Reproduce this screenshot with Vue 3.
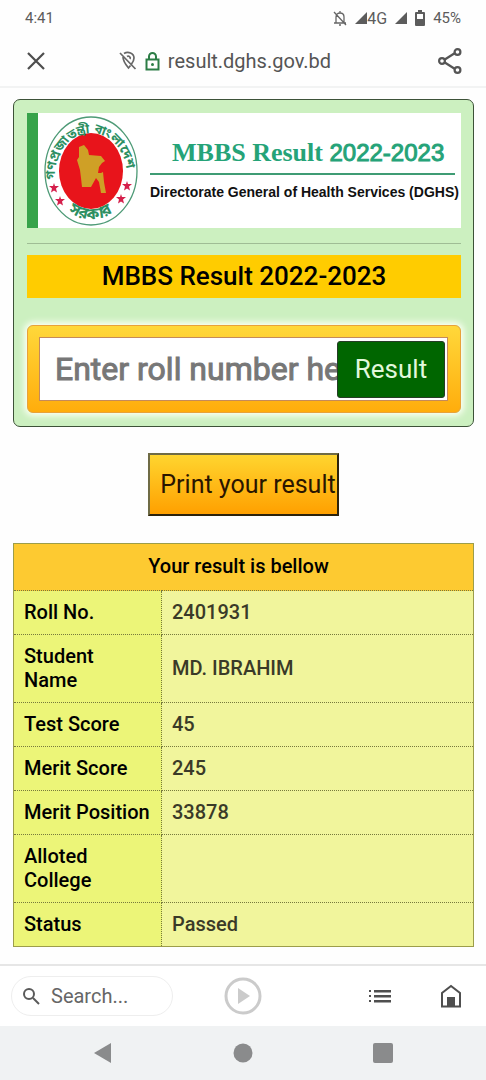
<script setup>
import { ref } from 'vue'

const roll = ref('')
const search = ref('')
const rows = [
  { label: 'Roll No.', value: '2401931' },
  { label: 'Student Name', value: 'MD. IBRAHIM' },
  { label: 'Test Score', value: '45' },
  { label: 'Merit Score', value: '245' },
  { label: 'Merit Position', value: '33878' },
  { label: 'Alloted College', value: '' },
  { label: 'Status', value: 'Passed' }
]
</script>

<template>
  <div class="screen">
    <header>
      <div class="status">
        <span>4:41</span>
        <div class="signals">
          <svg width="14" height="16" viewBox="0 0 14 16" fill="none" stroke="#666" stroke-width="1.3">
            <path d="M1 13h12M3 13V7c0-3 2-4 4-4s4 1 4 4v6M7 3V1M6 15h2M1 2l12 13" />
          </svg>
          <div class="network">
            <svg width="12" height="12" viewBox="0 0 12 12"><path d="M0 12L12 0v12z" fill="#5c5c5c" /></svg>
            <span class="fourg">4G</span>
          </div>
          <svg width="12" height="12" viewBox="0 0 12 12"><path d="M0 12L12 0v12z" fill="#5c5c5c" /></svg>
          <svg width="10" height="16" viewBox="0 0 10 16">
            <path d="M3 0h4v2h2q1 0 1 1v12q0 1-1 1H1q-1 0-1-1V3q0-1 1-1h2z" fill="#5c5c5c" />
            <path d="M2 4h6v5H2z" fill="#fff" />
          </svg>
          <span>45%</span>
        </div>
      </div>
      <div class="address">
        <button class="icon" aria-label="Close">
          <svg width="20" height="20" viewBox="0 0 20 20" fill="none" stroke="#4d4d4d" stroke-width="2.2"><path d="M2 2l16 16M18 2L2 18" /></svg>
        </button>
        <div class="site">
          <svg width="18" height="20" viewBox="0 0 18 20" fill="none" stroke="#666" stroke-width="1.7">
            <path d="M5 2.500C9 0 15 2 15 7c0 2-1 4-2.500 6M4 6c0 4 3 8 5.500 11l2-2.500M1 2l15.500 16" />
            <path d="M8 5.500a2 2 0 0 1 3 2.500" />
          </svg>
          <svg width="15" height="19" viewBox="0 0 15 19" fill="none" stroke="#2c7d46" stroke-width="2">
            <path d="M1.500 7.500h12v10h-12zM4 7V4.500a3.500 3.500 0 0 1 7 0V7" />
            <circle cx="7.500" cy="12.500" r="1.500" fill="#2c7d46" stroke="none" />
          </svg>
          <span>result.dghs.gov.bd</span>
        </div>
        <button class="icon" aria-label="Share">
          <svg width="24" height="26" viewBox="0 0 24 26" fill="none" stroke="#555" stroke-width="2.2">
            <path d="M6 12L17 5M6 14l11 7" />
            <circle cx="4" cy="13" r="2.900" /><circle cx="19.500" cy="4" r="2.900" /><circle cx="19.500" cy="22" r="2.900" />
          </svg>
        </button>
      </div>
    </header>

    <main>
      <section class="card">
        <div class="banner">
          <svg class="emblem" width="94" height="110" viewBox="0 0 94 110" role="img" aria-label="Government emblem">
            <defs>
              <path id="arc-top" d="M15.500 81A36 43 0 1 1 81 74" />
              <path id="arc-bottom" d="M19 91A43 50 0 0 0 77 89" />
            </defs>
            <ellipse cx="47" cy="55" rx="46" ry="54" fill="#fff" stroke="#4d9a76" stroke-width="1.300" />
            <ellipse cx="47" cy="55" rx="32" ry="38" fill="#e8141b" />
            <path d="M35 31l5-2 4 5 1 5 12 1 4 5-3 2-3 4-1 6 3 0 2-1 1 10 2 11-5 0-2-11-3-4-5 9-9 0-1-9-1-8-3-10 2-3z" fill="#cfa026" />
            <g fill="#d51f4b">
              <path id="star" d="M10 67l1 3 4 0-3 2.500 1 4-3-2-3 2 1-4-3-2.500 4 0z" />
              <use href="#star" x="6" y="13" /><use href="#star" x="73" y="-2" /><use href="#star" x="67" y="11" />
            </g>
            <g class="ring">
              <text><textPath href="#arc-top" startOffset="18">গণপ্রজাতন্ত্রী বাংলাদেশ</textPath></text>
              <text class="ring-bottom"><textPath href="#arc-bottom" startOffset="7">সরকার</textPath></text>
            </g>
          </svg>
          <div class="heading">
            <div class="heading-title">MBBS Result <span>2022-2023</span></div>
            <div class="heading-sub">Directorate General of Health Services (DGHS)</div>
          </div>
        </div>
        <hr />
        <h1>MBBS Result 2022-2023</h1>
        <form class="lookup" @submit.prevent>
          <input v-model="roll" type="text" aria-label="Roll number" placeholder="Enter roll number here" />
          <button type="submit">Result</button>
        </form>
      </section>

      <button class="print">Print your result</button>

      <table>
        <thead>
          <tr><th colspan="2">Your result is bellow</th></tr>
        </thead>
        <tbody>
          <tr v-for="row in rows" :key="row.label">
            <th scope="row">{{ row.label }}</th>
            <td>{{ row.value }}</td>
          </tr>
        </tbody>
      </table>
    </main>

    <footer>
      <div class="toolbar">
        <label class="search">
          <svg width="18" height="18" viewBox="0 0 18 18" fill="none" stroke="#5a5a5a" stroke-width="2"><circle cx="7" cy="7" r="5" /><path d="M11 11l6 6" /></svg>
          <input v-model="search" type="text" aria-label="Search" placeholder="Search..." />
        </label>
        <button class="icon" aria-label="Play">
          <svg width="38" height="38" viewBox="0 0 38 38"><circle cx="19" cy="19" r="17" fill="none" stroke="#cbcbcb" stroke-width="3" /><path d="M14 11l12 8-12 8z" fill="#cbcbcb" /></svg>
        </button>
        <div class="tools">
          <button class="icon" aria-label="List">
            <svg width="24" height="14" viewBox="0 0 24 14" fill="#4f4f4f"><path d="M1 1h2v2H1zM1 6h2v2H1zM1 11h2v2H1zM6 1h17v2.500H6zM6 6h17v2.500H6zM6 11h17v2.500H6z" /></svg>
          </button>
          <button class="icon" aria-label="Home">
            <svg width="22" height="24" viewBox="0 0 22 24"><path d="M2 22.500V9l9-7 9 7v13.500z" fill="none" stroke="#4f4f4f" stroke-width="2" /><path d="M7 13h8v10H7z" fill="#4f4f4f" /></svg>
          </button>
        </div>
      </div>
      <nav>
        <button class="icon" aria-label="Back"><svg width="20" height="20" viewBox="0 0 20 20"><path d="M1 10L18 0v20z" fill="#8a8b8c" /></svg></button>
        <button class="icon" aria-label="Home screen"><svg width="20" height="20" viewBox="0 0 20 20"><circle cx="10" cy="10" r="9.500" fill="#8a8b8c" /></svg></button>
        <button class="icon" aria-label="Recent apps"><svg width="20" height="20" viewBox="0 0 20 20"><rect width="20" height="20" rx="2" fill="#8a8b8c" /></svg></button>
      </nav>
    </footer>
  </div>
</template>

<style>
body {
  background: #fefefe;
}
</style>

<style scoped>
.screen {
  display: flex;
  flex-direction: column;
  min-height: 100vh;
  font-family: Roboto, "Liberation Sans", sans-serif;
  color: #000;
}
* {
  box-sizing: border-box;
}
svg {
  display: block;
  flex: none;
}
button,
input {
  font-family: inherit;
}
.icon {
  border: 0;
  padding: 0;
  background: none;
}
header {
  border-bottom: 2px solid #f2f3f3;
}
.status {
  display: flex;
  justify-content: space-between;
  align-items: center;
  height: 36px;
  padding: 0 25px;
  font-size: 15px;
  color: #5c5c5c;
}
.signals,
.network {
  display: flex;
  align-items: center;
}
.signals {
  gap: 8px;
}
.fourg {
  font-size: 16px;
}
.address {
  display: flex;
  align-items: center;
  height: 50px;
  padding: 0 24px 0 26px;
}
.site {
  flex: 1;
  display: flex;
  justify-content: center;
  align-items: center;
  gap: 8px;
  padding-right: 34px;
  font-size: 20px;
  color: #555;
}
main {
  flex: 1;
  display: flex;
  flex-direction: column;
  align-items: center;
  padding: 11px 12px 17px 13px;
}
.card {
  width: 100%;
  padding: 13px 12px 13px 13px;
  border: 1px solid #3d5238;
  border-radius: 7px;
  background: #ccf0c0;
}
.banner {
  display: flex;
  align-items: center;
  height: 115px;
  padding: 0 6px;
  border-left: 11px solid #37a34a;
  background: #fff;
}
.ring {
  font-family: "Noto Sans Bengali", "Noto Sans", sans-serif;
  font-size: 13px;
  font-weight: 700;
  fill: #2d8f62;
}
.ring-bottom {
  font-size: 16px;
}
.heading {
  flex: 1;
  min-width: 0;
  margin-left: 12px;
}
.heading-title {
  padding-left: 22px;
  border-bottom: 2px solid #3f9c74;
  font: 700 26px/40px "Liberation Serif", serif;
  color: #25a378;
  white-space: nowrap;
}
.heading-title span {
  font: 400 24px/40px "Liberation Sans", sans-serif;
  -webkit-text-stroke: 1px #25a378;
}
.heading-sub {
  font: 700 14px/34px "Liberation Sans", sans-serif;
  color: #111;
  white-space: nowrap;
}
hr {
  margin: 15px 0 11px;
  border: 0;
  border-top: 1px solid #9fbd95;
}
h1 {
  margin: 0;
  background: #fc0;
  font-size: 26px;
  font-weight: 500;
  line-height: 43px;
  text-align: center;
}
.lookup {
  position: relative;
  margin-top: 27px;
  padding: 11px 12px 11px 11px;
  border: 1px solid #e8a23a;
  border-radius: 6px;
  background: linear-gradient(#ffd83a, #ffad0c);
  box-shadow: 0 0 6px 3px #fbfff2;
}
.lookup input {
  display: block;
  width: 100%;
  height: 64px;
  padding: 2px 15px;
  border: 1px solid #c58a5a;
  border-radius: 0;
  background: #fff;
  font-size: 32px;
}
.lookup input::placeholder {
  color: #777;
  -webkit-text-stroke: 1px #777;
  opacity: 1;
}
.lookup button {
  position: absolute;
  top: 15px;
  right: 15px;
  width: 108px;
  height: 57px;
  padding: 0 0 2px;
  border: 1px solid #263c26;
  border-radius: 3px;
  background: #060;
  font-size: 26px;
  color: #e2f8dc;
}
.print {
  height: 63px;
  margin: 26px 0 27px;
  padding: 0 1px 0 10px;
  border: 2px solid;
  border-color: #6f6b45 #2c220c #2c220c #6f6b45;
  background: linear-gradient(#ffd52f, #ffa000);
  font-size: 25px;
  color: #2a1500;
}
table {
  width: 100%;
  border: 1px solid #9c9d4a;
  border-collapse: collapse;
  font-size: 20px;
  line-height: 24px;
  text-align: left;
}
th,
td {
  padding: 9px 10px 10px;
  border: 1px dotted #777a3c;
  font-weight: 500;
}
thead th {
  padding: 10px 20px 12px 10px;
  background: #fdca31;
  text-align: center;
}
tbody th {
  width: 148px;
  background: #ecf578;
}
td {
  background: #f1f59c;
  color: #3a3a28;
}
.toolbar {
  display: grid;
  grid-template-columns: 1fr auto 1fr;
  align-items: center;
  height: 62px;
  padding: 0 11px;
  border-top: 2px solid #e6e6e6;
  background: #fff;
}
.search {
  display: flex;
  align-items: center;
  gap: 11px;
  width: 162px;
  height: 40px;
  padding: 0 10px;
  border: 1px solid #eee;
  border-radius: 20px;
}
.search input {
  width: 100%;
  min-width: 0;
  padding: 0;
  border: 0;
  background: none;
  font-size: 20px;
}
.search input::placeholder {
  color: #666;
  opacity: 1;
}
.tools {
  display: flex;
  justify-content: flex-end;
  align-items: center;
  gap: 48px;
  padding-right: 13px;
}
nav {
  display: grid;
  grid-template-columns: repeat(3, 1fr);
  justify-items: center;
  align-items: center;
  height: 54px;
  padding: 0 33px;
  background: #f0f2f3;
}
</style>
